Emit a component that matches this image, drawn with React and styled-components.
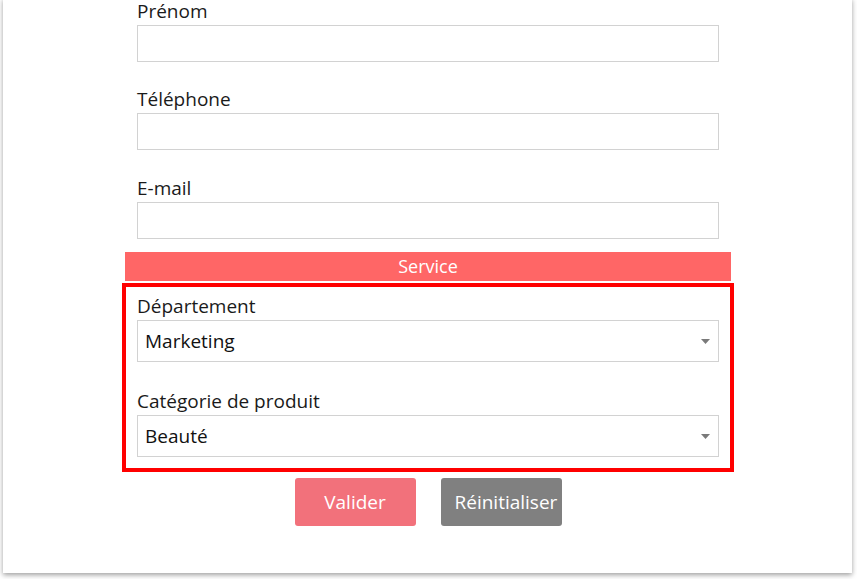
import React from "react"
import styled, { createGlobalStyle } from "styled-components"

const Global = createGlobalStyle`
  html, body {
    margin: 0;
    padding: 0;
    background: #ffffff;
    overflow: hidden;
  }
  body {
    font-family: "Open Sans", "Liberation Sans", sans-serif;
    color: #1f1f1f;
  }
`

const Page = styled.div`
  width: 857px;
  height: 579px;
  overflow: hidden;
`

const Card = styled.div`
  width: 849px;
  margin: -2px 0 0 3px;
  padding: 0 0 47px;
  background: #fff;
  box-shadow: 0 2px 5px rgba(0, 0, 0, 0.38);
  box-sizing: border-box;
`

const Form = styled.form`
  width: 606px;
  margin: 0 0 0 122px;
`

const Group = styled.div`
  padding: 0 12px;
  margin-bottom: ${(p) => p.gap || 0}px;
`

const Label = styled.label`
  display: block;
  font-size: 19px;
  line-height: 26px;
  margin-bottom: 1px;
  color: #1a1a1a;
`

const Input = styled.input`
  display: block;
  width: 100%;
  height: 37px;
  box-sizing: border-box;
  border: 1px solid #d2d2d2;
  background: #fff;
  outline: none;
  font: inherit;
`

const SectionBar = styled.div`
  height: 29px;
  margin-top: 13px;
  background: #ff6666;
  color: #fff;
  font-size: 18px;
  line-height: 29px;
  text-align: center;
`

const Highlight = styled.div`
  margin: 2px -3px 0;
  border: 4px solid #ff0000;
  padding: 6px 11px 11px;
`

const SelectWrap = styled.div`
  position: relative;
  margin-bottom: ${(p) => p.gap || 0}px;
`

const Select = styled.select`
  display: block;
  width: 100%;
  height: 42px;
  box-sizing: border-box;
  border: 1px solid #d2d2d2;
  background: #fff;
  padding: 0 28px 0 7px;
  font-family: "Open Sans", "Liberation Sans", sans-serif;
  font-size: 19px;
  color: #111;
  appearance: none;
  -webkit-appearance: none;
  outline: none;
`

const Arrow = styled.svg`
  position: absolute;
  right: 9px;
  top: 19px;
  pointer-events: none;
`

const Actions = styled.div`
  display: flex;
  justify-content: center;
  gap: 25px;
  margin-top: 6px;
`

const Button = styled.button`
  width: 121px;
  height: 48px;
  padding: 0 14px;
  border: none;
  border-radius: 3px;
  background: ${(p) => (p.variant === "reset" ? "#808080" : "#f2717b")};
  color: #fff;
  font-family: "Open Sans", "Liberation Sans", sans-serif;
  font-size: 19px;
  white-space: nowrap;
  text-align: center;
  overflow: visible;
  cursor: pointer;
`

const Caret = () => (
  <Arrow width="9" height="5" viewBox="0 0 9 5">
    <path d="M0 0h9L4.5 5z" fill="#7a7a7a" />
  </Arrow>
)

export default function App() {
  return (
    <Page>
      <Global />
      <Card>
        <Form onSubmit={(e) => e.preventDefault()}>
          <Group gap={24}>
            <Label>Prénom</Label>
            <Input type="text" />
          </Group>
          <Group gap={25}>
            <Label>Téléphone</Label>
            <Input type="tel" />
          </Group>
          <Group>
            <Label>E-mail</Label>
            <Input type="email" />
          </Group>
          <SectionBar>Service</SectionBar>
          <Highlight>
            <Label>Département</Label>
            <SelectWrap gap={26}>
              <Select defaultValue="Marketing">
                <option>Marketing</option>
                <option>Ventes</option>
                <option>Support</option>
              </Select>
              <Caret />
            </SelectWrap>
            <Label>Catégorie de produit</Label>
            <SelectWrap>
              <Select defaultValue="Beauté">
                <option>Beauté</option>
                <option>Mode</option>
                <option>Maison</option>
              </Select>
              <Caret />
            </SelectWrap>
          </Highlight>
          <Actions>
            <Button type="submit">Valider</Button>
            <Button type="reset" variant="reset">Réinitialiser</Button>
          </Actions>
        </Form>
      </Card>
    </Page>
  )
}
